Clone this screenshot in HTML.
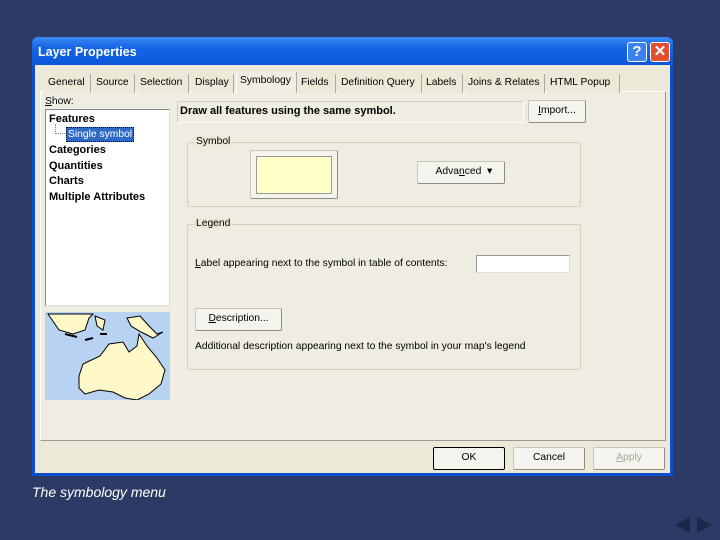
<!DOCTYPE html>
<html><head><meta charset="utf-8"><style>
*{margin:0;padding:0;box-sizing:border-box}
body{width:720px;height:540px;background:#2e3a66;position:relative;overflow:hidden;font-family:"Liberation Sans",sans-serif;font-size:10.3px;color:#000}
.a{position:absolute}
.dlg{left:32px;top:37px;width:641px;height:439px;background:#0b4fd0;border-radius:6px 6px 0 0}
.title{left:32px;top:37px;width:641px;height:28px;background:linear-gradient(#3a88f4,#1564e4 40%,#0a58d8);border-radius:6px 6px 0 0}
.body{left:35px;top:65px;width:635px;height:408px;background:#ece9d8}
.tab{top:74px;height:19px;background:#ece9d8;border-right:1px solid #aaa;padding:3px 0 0 3px;white-space:nowrap}
.btn{background:#f4f3ee;border:1px solid #c9c6b8;border-right-color:#8e8b7e;border-bottom-color:#8e8b7e;text-align:center;line-height:20px;border-radius:2px}
.grp{border:1px solid #d0d0bf;border-radius:3px}
.lbl{background:#ece9d8;padding:0 2px}
b{font-weight:bold;font-size:11px}
</style></head><body>
<div class="a dlg"></div>
<div class="a title"></div>
<div class="a" style="left:38px;top:45px;color:#fff;font-weight:bold;font-size:12.5px">Layer Properties</div>
<div class="a" style="left:627px;top:42px;width:20px;height:20px;background:#3a80f0;border:1px solid #fff;border-radius:3px;color:#fff;font-weight:bold;font-size:15px;text-align:center;line-height:18px">?</div>
<div class="a" style="left:650px;top:42px;width:20px;height:20px;background:#e05030;border:1px solid #fff;border-radius:3px;color:#fff;font-weight:bold;font-size:15px;text-align:center;line-height:18px">✕</div>
<div class="a body"></div>
<div class="a" style="left:40px;top:91px;width:626px;height:350px;border:1px solid #fff;border-right-color:#999;border-bottom-color:#999;background:#efece2"></div>
<div class="a tab" style="left:45px;width:46px">General</div>
<div class="a tab" style="left:93px;width:42px">Source</div>
<div class="a tab" style="left:137px;width:52px">Selection</div>
<div class="a tab" style="left:192px;width:42px">Display</div>
<div class="a tab" style="left:236px;top:72px;height:21px;width:61px;background:#efece2;border-left:1px solid #fff">Symbology</div>
<div class="a tab" style="left:298px;width:38px">Fields</div>
<div class="a tab" style="left:338px;width:84px">Definition Query</div>
<div class="a tab" style="left:423px;width:40px">Labels</div>
<div class="a tab" style="left:465px;width:80px">Joins &amp; Relates</div>
<div class="a tab" style="left:547px;width:73px">HTML Popup</div>
<div class="a" style="left:45px;top:96px"><u>S</u>how:</div>
<div class="a" style="left:45px;top:109px;width:125px;height:197px;background:#fff;border:1px solid #888;border-right-color:#ddd;border-bottom-color:#ddd"></div>
<div class="a" style="left:49px;top:112px;line-height:15.6px"><b>Features</b><br><br><b>Categories</b><br><b>Quantities</b><br><b>Charts</b><br><b>Multiple Attributes</b></div>
<div class="a" style="left:55px;top:124px;width:1px;height:10px;border-left:1px dotted #888"></div>
<div class="a" style="left:56px;top:133px;width:9px;border-top:1px dotted #888"></div>
<div class="a" style="left:66px;top:127px;background:#316ac5;color:#fff;padding:0 1px;border:1px dotted #000;line-height:13px">Single symbol</div>
<svg class="a" style="left:45px;top:312px" width="125" height="88" viewBox="0 0 125 88">
<rect width="125" height="88" fill="#b8d2f2"/>
<path d="M3 2 L14 18 L28 22 L40 18 L44 6 L48 2 Z" fill="#fff8c8" stroke="#000"/>
<path d="M50 4 L60 8 L58 18 L52 14 Z" fill="#fff8c8" stroke="#000"/>
<path d="M82 6 L95 4 L104 14 L112 22 L118 20 L108 26 L96 20 L86 14 Z" fill="#fff8c8" stroke="#000"/>
<path d="M20 22 L32 25 M40 28 L48 26 M55 22 L62 22" stroke="#000" stroke-width="2"/>
<path d="M34 64 L38 52 L55 44 L64 32 L78 30 L84 40 L92 34 L94 22 L102 34 L112 46 L120 58 L116 72 L104 82 L92 88 L80 86 L68 80 L54 78 L40 82 L34 76 Z" fill="#fff8c8" stroke="#000"/>
</svg>
<div class="a" style="left:177px;top:101px;width:347px;height:22px;border:1px solid #fff;border-top-color:#ccc;border-left-color:#ccc;padding:3px 2px"><b>Draw all features using the same symbol.</b></div>
<div class="a btn" style="left:528px;top:100px;width:58px;height:23px"><u>I</u>mport...</div>
<div class="a grp" style="left:187px;top:142px;width:394px;height:65px"></div>
<div class="a lbl" style="left:194px;top:136px">Symbol</div>
<div class="a btn" style="left:250px;top:150px;width:88px;height:49px"></div>
<div class="a" style="left:256px;top:156px;width:76px;height:38px;background:#ffffc8;border:1px solid #999"></div>
<div class="a btn" style="left:417px;top:161px;width:88px;height:23px">&nbsp;&nbsp;Adva<u>n</u>ced&nbsp;&nbsp;▾</div>
<div class="a grp" style="left:187px;top:224px;width:394px;height:146px"></div>
<div class="a lbl" style="left:194px;top:218px">Legend</div>
<div class="a" style="left:195px;top:258px"><u>L</u>abel appearing next to the symbol in table of contents:</div>
<div class="a" style="left:476px;top:255px;width:94px;height:18px;background:#fff;border:1px solid #999;border-right-color:#ddd;border-bottom-color:#ddd"></div>
<div class="a btn" style="left:195px;top:308px;width:87px;height:23px"><u>D</u>escription...</div>
<div class="a" style="left:195px;top:341px">Additional description appearing next to the symbol in your map's legend</div>
<div class="a btn" style="left:433px;top:447px;width:72px;height:23px;border:1px solid #000">OK</div>
<div class="a btn" style="left:513px;top:447px;width:72px;height:23px">Cancel</div>
<div class="a btn" style="left:593px;top:447px;width:72px;height:23px;color:#aca899"><u>A</u>pply</div>
<div class="a" style="left:32px;top:484px;color:#fff;font-style:italic;font-size:14px">The symbology menu</div>
<svg class="a" style="left:674px;top:516px" width="40" height="18"><path d="M1 9 L16 1 L16 17 Z M23 1 L38 9 L23 17 Z" fill="#1c2748"/></svg>
</body></html>
